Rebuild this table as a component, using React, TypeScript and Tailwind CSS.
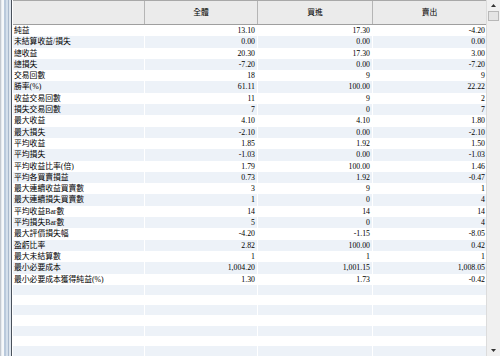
import React from "react";

const rows: [string, string, string, string][] = [
  ["純益", "13.10", "17.30", "-4.20"],
  ["未結算收益/損失", "0.00", "0.00", "0.00"],
  ["總收益", "20.30", "17.30", "3.00"],
  ["總損失", "-7.20", "0.00", "-7.20"],
  ["交易回數", "18", "9", "9"],
  ["勝率(%)", "61.11", "100.00", "22.22"],
  ["收益交易回數", "11", "9", "2"],
  ["損失交易回數", "7", "0", "7"],
  ["最大收益", "4.10", "4.10", "1.80"],
  ["最大損失", "-2.10", "0.00", "-2.10"],
  ["平均收益", "1.85", "1.92", "1.50"],
  ["平均損失", "-1.03", "0.00", "-1.03"],
  ["平均收益比率(倍)", "1.79", "100.00", "1.46"],
  ["平均各買賣損益", "0.73", "1.92", "-0.47"],
  ["最大連續收益買賣數", "3", "9", "1"],
  ["最大連續損失買賣數", "1", "0", "4"],
  ["平均收益Bar數", "14", "14", "14"],
  ["平均損失Bar數", "5", "0", "4"],
  ["最大評價損失幅", "-4.20", "-1.15", "-8.05"],
  ["盈虧比率", "2.82", "100.00", "0.42"],
  ["最大未結算數", "1", "1", "1"],
  ["最小必要成本", "1,004.20", "1,001.15", "1,008.05"],
  ["最小必要成本獲得純益(%)", "1.30", "1.73", "-0.42"],
];

const font = {
  fontFamily: '"Liberation Serif", "Noto Sans CJK TC", serif',
};

function Row({ cells, shaded }: { cells: string[]; shaded: boolean }) {
  return (
    <div
      className={`flex h-[11.3px] text-[7.8px] leading-[11.3px] text-black ${
        shaded ? "bg-[#edf2f8]" : "bg-white"
      }`}
    >
      <div className="w-[132px] shrink-0 border-r border-white pl-[1px] whitespace-nowrap overflow-hidden">
        {cells[0] ?? ""}
      </div>
      <div className="w-[113px] shrink-0 border-r border-white pr-[2px] text-right">
        {cells[1] ?? ""}
      </div>
      <div className="w-[115px] shrink-0 border-r border-white pr-[2px] text-right">
        {cells[2] ?? ""}
      </div>
      <div className="w-[113px] shrink-0 pr-[1px] text-right">{cells[3] ?? ""}</div>
    </div>
  );
}

export default function App() {
  const empty = Array.from({ length: 7 });
  return (
    <div className="w-[500px] h-[356px] overflow-hidden flex bg-white" style={font}>
      {/* left window frame */}
      <div className="flex h-full shrink-0">
        <div className="w-[1px] bg-[#c3c8cf]" />
        <div className="w-[1px] bg-[#e6eaef]" />
        <div className="w-[2px] bg-[#f6f8fa]" />
        <div className="w-[2px] bg-[#b9c9dc]" />
        <div className="w-[2px] bg-[#d4dfeb]" />
        <div className="w-[1px] bg-[#a9b9cd]" />
        <div className="w-[2px] bg-[#dfe6ee]" />
        <div className="w-[1px] bg-[#4a525c]" />
        <div className="w-[1px] bg-[#ffffff]" />
      </div>

      {/* table */}
      <div className="flex flex-col w-[473px] shrink-0 h-full overflow-hidden">
        <div className="flex h-[25px] shrink-0 border-t border-b border-t-[#a8a8a8] border-b-[#9f9f9f] bg-[#ebebeb] text-[7.8px] text-black">
          <div className="w-[132px] shrink-0 border-r border-[#b5b5b5]" />
          <div className="w-[113px] shrink-0 border-r border-[#b5b5b5] flex items-center justify-center">
            全體
          </div>
          <div className="w-[115px] shrink-0 border-r border-[#b5b5b5] flex items-center justify-center">
            買進
          </div>
          <div className="w-[113px] shrink-0 flex items-center justify-center">賣出</div>
        </div>
        {rows.map((r, i) => (
          <Row key={i} cells={r} shaded={i % 2 === 1} />
        ))}
        {empty.map((_, i) => (
          <Row key={"e" + i} cells={[]} shaded={i % 2 === 0} />
        ))}
      </div>

      {/* scrollbar */}
      <div className="flex flex-col w-[14px] shrink-0 h-full bg-[#f0f0f0] border-l border-[#dcdcdc]">
        <div className="h-[11px] flex items-center justify-center">
          <svg width="5" height="3" viewBox="0 0 5 3">
            <path d="M0 3 L2.5 0 L5 3 Z" fill="#333" />
          </svg>
        </div>
        <div className="h-[10px] mx-[1px] border border-[#b8b8b8] bg-[#e4e4e4]" />
        <div className="flex-1" />
        <div className="h-[11px] flex items-center justify-center">
          <svg width="5" height="3" viewBox="0 0 5 3">
            <path d="M0 0 L5 0 L2.5 3 Z" fill="#333" />
          </svg>
        </div>
      </div>
    </div>
  );
}
